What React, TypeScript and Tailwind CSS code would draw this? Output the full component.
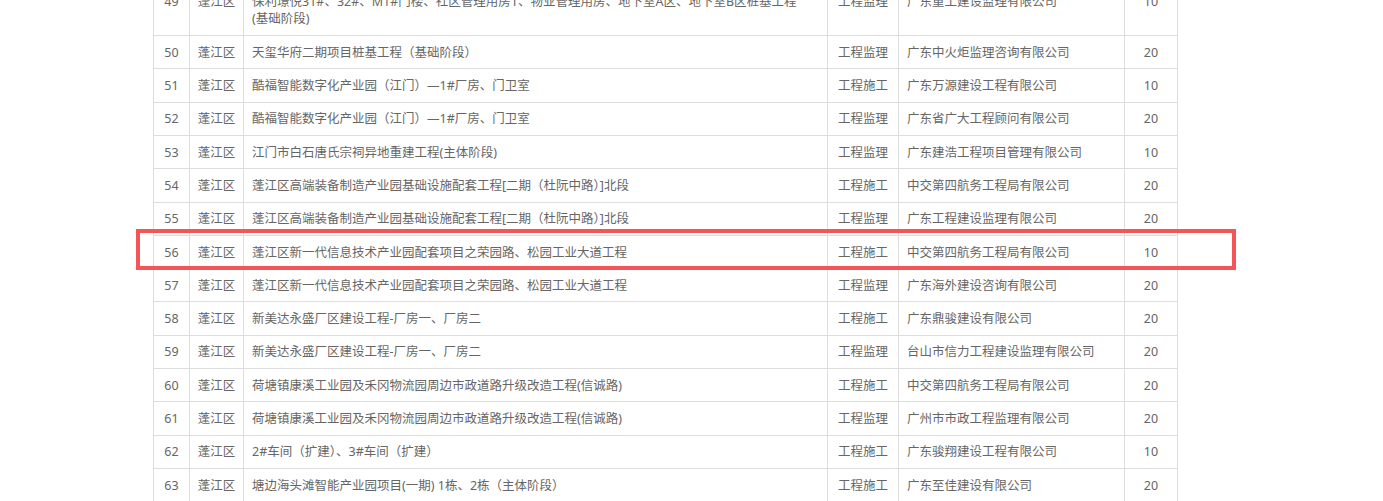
import React from "react";

type Row = {
  no: number;
  area: string;
  name: React.ReactNode;
  kind: string;
  company: string;
  score: number;
};

const rows: Row[] = [
  {
    no: 49,
    area: "蓬江区",
    name: (
      <>
        保利璟悦项目一期住宅、商业及配套设施工程
        <br />
        保利璟悦31#、32#、M1#门楼、社区管理用房1、物业管理用房、地下室A区、地下室B区桩基工程
        <br />
        (基础阶段)
      </>
    ),
    kind: "工程监理",
    company: "广东重工建设监理有限公司",
    score: 10,
  },
  { no: 50, area: "蓬江区", name: "天玺华府二期项目桩基工程（基础阶段）", kind: "工程监理", company: "广东中火炬监理咨询有限公司", score: 20 },
  { no: 51, area: "蓬江区", name: "酷福智能数字化产业园（江门）—1#厂房、门卫室", kind: "工程施工", company: "广东万源建设工程有限公司", score: 10 },
  { no: 52, area: "蓬江区", name: "酷福智能数字化产业园（江门）—1#厂房、门卫室", kind: "工程监理", company: "广东省广大工程顾问有限公司", score: 20 },
  { no: 53, area: "蓬江区", name: "江门市白石唐氏宗祠异地重建工程(主体阶段)", kind: "工程监理", company: "广东建浩工程项目管理有限公司", score: 10 },
  { no: 54, area: "蓬江区", name: "蓬江区高端装备制造产业园基础设施配套工程[二期（杜阮中路）]北段", kind: "工程施工", company: "中交第四航务工程局有限公司", score: 20 },
  { no: 55, area: "蓬江区", name: "蓬江区高端装备制造产业园基础设施配套工程[二期（杜阮中路）]北段", kind: "工程监理", company: "广东工程建设监理有限公司", score: 20 },
  { no: 56, area: "蓬江区", name: "蓬江区新一代信息技术产业园配套项目之荣园路、松园工业大道工程", kind: "工程施工", company: "中交第四航务工程局有限公司", score: 10 },
  { no: 57, area: "蓬江区", name: "蓬江区新一代信息技术产业园配套项目之荣园路、松园工业大道工程", kind: "工程监理", company: "广东海外建设咨询有限公司", score: 20 },
  { no: 58, area: "蓬江区", name: "新美达永盛厂区建设工程-厂房一、厂房二", kind: "工程施工", company: "广东鼎骏建设有限公司", score: 20 },
  { no: 59, area: "蓬江区", name: "新美达永盛厂区建设工程-厂房一、厂房二", kind: "工程监理", company: "台山市信力工程建设监理有限公司", score: 20 },
  { no: 60, area: "蓬江区", name: "荷塘镇康溪工业园及禾冈物流园周边市政道路升级改造工程(信诚路)", kind: "工程施工", company: "中交第四航务工程局有限公司", score: 20 },
  { no: 61, area: "蓬江区", name: "荷塘镇康溪工业园及禾冈物流园周边市政道路升级改造工程(信诚路)", kind: "工程监理", company: "广州市市政工程监理有限公司", score: 20 },
  { no: 62, area: "蓬江区", name: "2#车间（扩建）、3#车间（扩建）", kind: "工程施工", company: "广东骏翔建设工程有限公司", score: 10 },
  { no: 63, area: "蓬江区", name: "塘边海头滩智能产业园项目(一期) 1栋、2栋（主体阶段）", kind: "工程施工", company: "广东至佳建设有限公司", score: 20 },
];

const td = "border border-[#dddddd] py-[7.67px] leading-[17px]";

export default function App() {
  return (
    <div className="h-[501px] w-[1383px] overflow-hidden bg-white font-['Noto_Sans','Noto_Sans_CJK_SC',sans-serif] text-[12.5px] text-[#666666]">
      <div className="relative ml-[153px] mt-[-32.33px] w-[1024px]">
        <table className="w-[1024px] table-fixed border-collapse">
          <colgroup>
            <col className="w-[36px]" />
            <col className="w-[54px]" />
            <col className="w-[584px]" />
            <col className="w-[71px]" />
            <col className="w-[226px]" />
            <col className="w-[53px]" />
          </colgroup>
          <tbody>
            {rows.map((r) => (
              <tr key={r.no} className="align-middle">
                <td className={`${td} text-center`}>{r.no}</td>
                <td className={`${td} text-center`}>{r.area}</td>
                <td className={`${td} px-[8px] text-left`}>{r.name}</td>
                <td className={`${td} text-center`}>{r.kind}</td>
                <td className={`${td} px-[8px] text-left`}>{r.company}</td>
                <td className={`${td} text-center`}>{r.score}</td>
              </tr>
            ))}
          </tbody>
        </table>
        {/* highlight on row 56 */}
        <div className="pointer-events-none absolute left-[-17px] top-[261.33px] h-[41px] w-[1100px] border-[4px] border-[#f65558]" />
      </div>
    </div>
  );
}
